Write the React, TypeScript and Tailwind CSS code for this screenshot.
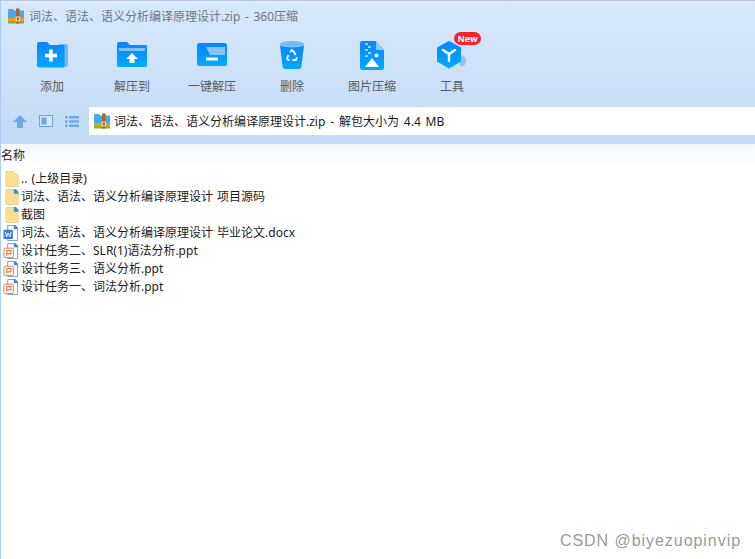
const font = "[font-family:'Noto_Sans','Noto_Sans_CJK_SC',sans-serif]"

function ZipIcon({ size = 16 }: { size?: number }) {
  return (
    <svg width={size} height={size} viewBox="0 0 16 16" className="shrink-0">
      <path d="M0 2.500C0 1.700.6 1 1.400 1H5l1.500 1.500H16V11H0z" fill="#4aa8ee" />
      <rect x="0" y="10" width="16" height="3" fill="#f29b22" />
      <rect x="0" y="13" width="16" height="2.500" fill="#7cb93a" />
      <rect x="8" y="0.500" width="3.500" height="15" fill="#a8672a" />
      <rect x="8.200" y="9" width="3.200" height="4" fill="none" stroke="#fbe7b0" strokeWidth="1" />
    </svg>
  )
}

function AddIcon() {
  return (
    <svg width="32" height="28" viewBox="0 0 32 28">
      <defs>
        <linearGradient id="fa" x1="0" y1="0" x2="0" y2="1">
          <stop offset="0" stopColor="#0a84ff" />
          <stop offset="1" stopColor="#00aaff" />
        </linearGradient>
      </defs>
      <path d="M23 3h7a2 2 0 0 1 2 2v19a2 2 0 0 1-2 2h-4z" fill="#6fbcfb" />
      <path d="M1 3a2 2 0 0 1 2-2h8l3 3h14.500v21a1.500 1.500 0 0 1-1.500 1.500H3a2 2 0 0 1-2-2z" fill="url(#fa)" />
      <rect x="13.200" y="8.500" width="3.500" height="12" fill="#fff" />
      <rect x="9" y="12.800" width="12" height="3.500" fill="#fff" />
    </svg>
  )
}

function ExtractToIcon() {
  return (
    <svg width="32" height="28" viewBox="0 0 32 28">
      <defs>
        <linearGradient id="fb" x1="0" y1="0" x2="0" y2="1">
          <stop offset="0" stopColor="#0a84ff" />
          <stop offset="1" stopColor="#00aaff" />
        </linearGradient>
      </defs>
      <path d="M1 3a2 2 0 0 1 2-2h8l3 3h15.500a1.500 1.500 0 0 1 1.500 1.500V24a2 2 0 0 1-2 2H3a2 2 0 0 1-2-2z" fill="url(#fb)" />
      <rect x="3" y="7" width="26" height="3" fill="#7fc2fb" />
      <path d="M16 12l6 6h-3.500v4h-5v-4H10z" fill="#fff" />
    </svg>
  )
}

function OneKeyIcon() {
  return (
    <svg width="32" height="26" viewBox="0 0 32 26">
      <defs>
        <linearGradient id="fc" x1="0" y1="0" x2="0" y2="1">
          <stop offset="0" stopColor="#0a84ff" />
          <stop offset="1" stopColor="#00aaff" />
        </linearGradient>
      </defs>
      <rect x="1" y="1" width="30" height="23" rx="2.500" fill="url(#fc)" />
      <path d="M10 5h19v8H14z" fill="#83c5fb" />
      <rect x="10" y="15.500" width="12" height="3" fill="#fff" />
    </svg>
  )
}

function TrashIcon() {
  return (
    <svg width="26" height="30" viewBox="0 0 26 30">
      <defs>
        <linearGradient id="fd" x1="0" y1="0" x2="0" y2="1">
          <stop offset="0" stopColor="#0a84ff" />
          <stop offset="1" stopColor="#00aaff" />
        </linearGradient>
      </defs>
      <ellipse cx="13" cy="4" rx="12" ry="3" fill="#6fbcfb" />
      <path d="M1 5c3 3 21 3 24 0l-2.500 21a3 3 0 0 1-3 3H6.500a3 3 0 0 1-3-3z" fill="url(#fd)" />
      <path d="M11 12l2-2 2 2 1.500 3M18 17l-1 3h-3.500M10.500 20H9l-1-2 1.500-3" fill="none" stroke="#fff" strokeWidth="1.800" strokeLinejoin="round" />
    </svg>
  )
}

function ImageZipIcon() {
  return (
    <svg width="24" height="29" viewBox="0 0 24 29">
      <defs>
        <linearGradient id="fe" x1="0" y1="0" x2="0" y2="1">
          <stop offset="0" stopColor="#0a84ff" />
          <stop offset="1" stopColor="#00aaff" />
        </linearGradient>
      </defs>
      <path d="M2 0h14l8 9v18a2 2 0 0 1-2 2H2a2 2 0 0 1-2-2V2a2 2 0 0 1 2-2z" fill="url(#fe)" />
      <path d="M16 0l8 9h-8z" fill="#8ccafc" />
      <path d="M5 2h3v2H5zM8 5h3v2H8zM5 8h3v2H5zM8 11h3v2H8zM5 14h3v2H5z" fill="#9bd2fd" />
      <circle cx="16.500" cy="14.500" r="2" fill="#fff" />
      <path d="M5 26l7-9 7 9z" fill="#fff" />
    </svg>
  )
}

function ToolIcon() {
  return (
    <svg width="32" height="30" viewBox="0 0 32 30">
      <defs>
        <linearGradient id="ff" x1="0" y1="0" x2="0" y2="1">
          <stop offset="0" stopColor="#0a84ff" />
          <stop offset="1" stopColor="#00aaff" />
        </linearGradient>
      </defs>
      <path d="M24 15l5 2 1.500 4-1.500 4-5 2z" fill="#8cc4f8" />
      <path d="M13 1l12 6.500v14L13 28.500 1 21.500v-14z" fill="url(#ff)" />
      <path d="M7 10l6 4 6-4M13 14v7" fill="none" stroke="#fff" strokeWidth="2.400" strokeLinecap="round" />
    </svg>
  )
}

function FolderFile({ plain }: { plain?: boolean }) {
  return (
    <svg width="14" height="16" viewBox="0 0 14 17" className="shrink-0">
      <path d="M.5.500H9l4.500 4V16.500H.5z" fill="#fde08f" stroke="#e6cf95" />
      {!plain && <path d="M9 0h2l3 3v2H9z" fill="#3b8fd8" />}
      {plain && <path d="M9 .5l4.500 4H9z" fill="#fde08f" />}
    </svg>
  )
}

function WordFile() {
  return (
    <svg width="16" height="16" viewBox="0 0 16 17" className="shrink-0">
      <path d="M4.500.500H11l4 4V16.500H4.500z" fill="#fff" stroke="#8a9ab0" />
      <path d="M11 0h1.500L15.500 3v1.500H11z" fill="#3b8fd8" />
      <rect x="0" y="5" width="10" height="10" rx="1" fill="#3f7fdc" />
      <path d="M2 7.500l1.300 5 1.700-4 1.700 4 1.300-5" fill="none" stroke="#fff" strokeWidth="1" />
    </svg>
  )
}

function PptFile() {
  return (
    <svg width="16" height="16" viewBox="0 0 16 17" className="shrink-0">
      <path d="M4.500.500H11l4 4V16.500H4.500z" fill="#fff" stroke="#8a9ab0" />
      <path d="M11 0h1.500L15.500 3v1.500H11z" fill="#3b8fd8" />
      <rect x="0.500" y="5.500" width="10" height="10" rx="1.500" fill="#fff" stroke="#e8764a" />
      <path d="M3 8h5v3.500H4M3.500 8v5.500" fill="none" stroke="#e8764a" strokeWidth="1.200" />
    </svg>
  )
}

const tools = [
  { label: '添加', icon: <AddIcon /> },
  { label: '解压到', icon: <ExtractToIcon /> },
  { label: '一键解压', icon: <OneKeyIcon /> },
  { label: '删除', icon: <TrashIcon /> },
  { label: '图片压缩', icon: <ImageZipIcon /> },
  { label: '工具', icon: <ToolIcon />, badge: true },
]

const files = [
  { name: '.. (上级目录)', icon: <FolderFile plain /> },
  { name: '词法、语法、语义分析编译原理设计 项目源码', icon: <FolderFile /> },
  { name: '截图', icon: <FolderFile /> },
  { name: '词法、语法、语义分析编译原理设计 毕业论文.docx', icon: <WordFile /> },
  { name: '设计任务二、SLR(1)语法分析.ppt', icon: <PptFile /> },
  { name: '设计任务三、语义分析.ppt', icon: <PptFile /> },
  { name: '设计任务一、词法分析.ppt', icon: <PptFile /> },
]

export default function App() {
  return (
    <div className={`relative w-[755px] h-[559px] overflow-hidden bg-white border-l border-[#a9cdf5] ${font}`}>
      <div className="h-[144px] bg-gradient-to-b from-[#d7e8fc] to-[#c3dbf6] border-t border-[#b9c7d6]">
        <div className="flex items-center h-[30px] pl-[7px] gap-[5px]">
          <ZipIcon />
          <span className="pt-[2px] text-xs text-[#6e7680] leading-none [word-spacing:1.5px]">词法、语法、语义分析编译原理设计.zip - 360压缩</span>
        </div>

        <div className="flex h-[76px] pl-[11px]">
          {tools.map((t) => (
            <div key={t.label} className="relative flex flex-col items-center w-[80px]">
              <div className="flex items-center justify-center h-[32px] mt-[8px]">{t.icon}</div>
              <span className="mt-[7px] text-xs leading-[18px] text-[#555c66]">{t.label}</span>
              {t.badge && (
                <span className="absolute left-[42px] top-[1px] w-[27px] h-[13px] flex items-center justify-center rounded-full bg-[#f5222f] text-white text-[9px] font-bold leading-none">
                  New
                </span>
              )}
            </div>
          ))}
        </div>

        <div className="flex items-center h-[28px]">
          <div className="flex items-center w-[88px] pl-[12px] gap-[12px]">
            <svg width="14" height="13" viewBox="0 0 14 13">
              <path d="M7 0l7 7h-4v6H4V7H0z" fill="#6fa5ea" />
            </svg>
            <svg width="14" height="12" viewBox="0 0 14 12">
              <rect x=".5" y=".5" width="13" height="11" fill="#d5e6fa" stroke="#6fa5ea" />
              <rect x="2.500" y="2.500" width="5" height="7" fill="#6fa5ea" />
            </svg>
            <svg width="14" height="11" viewBox="0 0 14 11">
              <path d="M0 0h2.500v2.500H0zM4 0h10v2.500H4zM0 4.250h2.500v2.500H0zM4 4.250h10v2.500H4zM0 8.500h2.500V11H0zM4 8.500h10V11H4z" fill="#6fa5ea" />
            </svg>
          </div>
          <div className="flex-1 h-[28px] bg-white flex items-center pl-[5px] gap-[4px]">
            <ZipIcon />
            <span className="pt-[2px] text-xs text-[#1c1c1c] leading-none [word-spacing:1.75px]">词法、语法、语义分析编译原理设计.zip - 解包大小为 4.4 MB</span>
          </div>
        </div>
      </div>

      <div className="h-[24px] flex items-center bg-gradient-to-b from-[#f4f9ff] to-white text-xs text-[#1c1c1c]">
        名称
      </div>

      <ul className="mt-[2px] pl-[2px]">
        {files.map((f) => (
          <li key={f.name} className="flex items-center h-[18px] gap-[2px] text-xs text-[#1c1c1c] whitespace-nowrap">
            <span className="flex justify-end w-[16px] shrink-0">{f.icon}</span>
            <span className="leading-none [word-spacing:1px]">{f.name}</span>
          </li>
        ))}
      </ul>

      <span className="absolute right-[14px] bottom-[10px] text-base leading-none tracking-[.95px] text-[#9a9a9a] [font-family:'Liberation_Sans',sans-serif]">
        CSDN @biyezuopinvip
      </span>
    </div>
  )
}
